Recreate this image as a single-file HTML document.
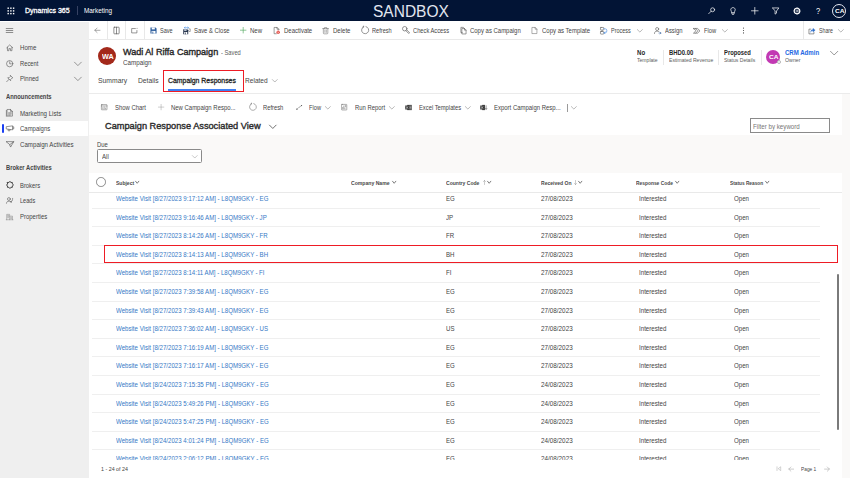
<!DOCTYPE html>
<html><head><meta charset="utf-8"><title>Wadi Al Riffa Campaign</title>
<style>
*{box-sizing:border-box;margin:0;padding:0}
html,body{width:850px;height:478px;overflow:hidden;background:#fff;font-family:"Liberation Sans",sans-serif;color:#333}
.a{position:absolute;white-space:nowrap;transform-origin:0 50%}
.b{position:absolute}
#top{left:0;top:0;width:850px;height:21px;background:#021435}
#side{left:0;top:22.4px;width:88.8px;height:456px;background:#efefef}
#cmd{left:89px;top:21px;width:761px;height:19px;background:#fff;border-bottom:1px solid #e9e9e9}
#hdr{left:89px;top:40px;width:761px;height:54px;background:#fff;border-bottom:1px solid #ebebeb}
#body{left:89px;top:94px;width:761px;height:384px;background:#faf9f8}
#card{left:89px;top:94px;width:753px;height:384px;background:#fff}
#fil{left:89px;top:135px;width:753px;height:38px;background:#faf9f8}
#clip{left:89px;top:191.5px;width:753px;height:268.5px;overflow:hidden}
#clip>.in{position:absolute;left:-89px;top:-191.5px;width:850px;height:478px}
.rl{position:absolute;left:91.5px;width:728px;height:1px;background:#efefef}
.vs{position:absolute;width:1px;background:#e8e8e8}
svg{position:absolute;overflow:visible;fill:none;stroke:#444;stroke-width:.6;stroke-linecap:round;stroke-linejoin:round}
</style></head><body>
<div class="b" id="top"></div>
<div class="b" id="side"></div>
<div class="b" style="left:0;top:121px;width:88px;height:14.7px;background:#fff"></div>
<div class="b" style="left:1.8px;top:123.5px;width:1.9px;height:9.2px;background:#1a3ff2;border-radius:1px"></div>
<div class="b" id="cmd"></div>
<div class="b" id="hdr"></div>
<div class="b" id="body"></div>
<div class="b" id="card"></div>
<div class="b" id="fil"></div>
<!-- separators -->
<div class="vs" style="left:76.5px;top:6px;height:9px;background:#364263"></div>
<div class="vs" style="left:107px;top:21px;height:18px"></div>
<div class="vs" style="left:125px;top:21px;height:18px"></div>
<div class="vs" style="left:144px;top:21px;height:18px"></div>
<div class="vs" style="left:803px;top:21px;height:18px"></div>
<div class="vs" style="left:662.5px;top:49.5px;height:15px"></div>
<div class="vs" style="left:718px;top:49.5px;height:15px"></div>
<div class="vs" style="left:761px;top:49.5px;height:15px"></div>
<div class="vs" style="left:566.5px;top:103.5px;height:8px;background:#9a9a9a"></div>
<!-- avatars -->
<div class="b" style="left:98.2px;top:46.7px;width:18.2px;height:18.2px;border-radius:50%;background:#a3291b"></div>
<div class="b" style="left:766.4px;top:49.9px;width:14px;height:14px;border-radius:50%;background:#c239b3"></div>
<div class="b" style="left:776.6px;top:60px;width:4.4px;height:4.4px;border-radius:50%;background:#fff;border:.6px solid #b5b5b5"></div>
<div class="b" style="left:832.4px;top:4px;width:14px;height:14px;border-radius:50%;border:.7px solid #e4e7f0"></div>
<!-- tab highlight -->
<div class="b" style="left:168.3px;top:89px;width:67.8px;height:1.8px;background:#3f7ff2"></div>
<div class="b" style="left:163px;top:70px;width:80.6px;height:22px;border:1.2px solid #ee1c25"></div>
<!-- inputs -->
<div class="b" style="left:749.9px;top:117.9px;width:79.8px;height:15.4px;border:1px solid #8a8a8a;background:#fff"></div>
<div class="b" style="left:97.3px;top:149px;width:105.2px;height:14.4px;border:1px solid #8a8a8a;border-radius:1.5px;background:#fff"></div>
<div class="b" style="left:96.1px;top:177.4px;width:9.6px;height:9.6px;border-radius:50%;border:.8px solid #8a8a8a;background:#fff"></div>
<div class="b" style="left:89px;top:191.5px;width:753px;height:1px;background:#e9e9e9"></div>
<!-- scrollbar -->
<div class="b" style="left:836.8px;top:274px;width:2.2px;height:155.5px;background:#7a7a7a;border-radius:1px"></div>
<svg style="left:6.70px;top:6.70px;stroke:#fff;stroke-width:1.30" width="7.60" height="7.60" viewBox="0 0 16 16"><rect x="1.0" y="1.0" width="3" height="3" fill="#fff" stroke="none"/><rect x="1.0" y="6.7" width="3" height="3" fill="#fff" stroke="none"/><rect x="1.0" y="12.4" width="3" height="3" fill="#fff" stroke="none"/><rect x="6.7" y="1.0" width="3" height="3" fill="#fff" stroke="none"/><rect x="6.7" y="6.7" width="3" height="3" fill="#fff" stroke="none"/><rect x="6.7" y="12.4" width="3" height="3" fill="#fff" stroke="none"/><rect x="12.4" y="1.0" width="3" height="3" fill="#fff" stroke="none"/><rect x="12.4" y="6.7" width="3" height="3" fill="#fff" stroke="none"/><rect x="12.4" y="12.4" width="3" height="3" fill="#fff" stroke="none"/></svg>
<svg style="left:708.30px;top:7.30px;stroke:#fff;stroke-width:1.50" width="7.40" height="7.40" viewBox="0 0 16 16"><circle cx="10" cy="6" r="4.3"/><path d="M7 9 L1.5 14.5"/></svg>
<svg style="left:728.60px;top:6.80px;stroke:#fff;stroke-width:1.40" width="8.00" height="8.00" viewBox="0 0 16 16"><path d="M5.8 11 C5.8 9 3.5 8.5 3.5 5.5 C3.5 3 5.5 1.2 8 1.2 C10.5 1.2 12.5 3 12.5 5.5 C12.5 8.5 10.2 9 10.2 11 Z M5.8 11 V13.5 C5.8 14.5 6.5 15 8 15 C9.5 15 10.2 14.5 10.2 13.5 V11"/></svg>
<svg style="left:750.50px;top:7.20px;stroke:#fff;stroke-width:1.50" width="7.60" height="7.60" viewBox="0 0 16 16"><path d="M8 1 V15 M1 8 H15"/></svg>
<svg style="left:771.70px;top:7.40px;stroke:#fff;stroke-width:1.50" width="7.60" height="7.60" viewBox="0 0 16 16"><path d="M1.5 2 H14.5 L9.5 8.5 V13 L6.5 15 V8.5 Z"/></svg>
<svg style="left:792.70px;top:7.00px;stroke:#fff;stroke-width:1.20" width="8.00" height="8.00" viewBox="0 0 16 16"><circle cx="8" cy="8" r="5.6" stroke-dasharray="2.2 1.1" stroke-width="2.6"/><circle cx="8" cy="8" r="2.2"/></svg>
<svg style="left:94.10px;top:27.10px;stroke:#6a6a6a;stroke-width:1.40" width="6.60" height="6.60" viewBox="0 0 16 16"><path d="M14.5 8 H2 M7.5 2.5 L2 8 L7.5 13.5"/></svg>
<svg style="left:112.70px;top:26.90px;stroke:#555;stroke-width:1.50" width="7.00" height="7.00" viewBox="0 0 16 16"><rect x="2" y="0.5" width="12" height="15" rx="1"/><path d="M8 0.5 V15.5"/></svg>
<svg style="left:131.10px;top:27.10px;stroke:#555;stroke-width:1.40" width="7.00" height="7.00" viewBox="0 0 16 16"><path d="M10 3.5 H1.5 V13.5 H13.5 V8"/><circle cx="13.8" cy="3" r="1.1" fill="#444" stroke="none"/></svg>
<svg style="left:150.30px;top:26.60px;stroke:#444;stroke-width:1.30" width="7.00" height="7.00" viewBox="0 0 16 16"><path d="M1 1 H12.5 L15 3.5 V15 H1 Z" fill="#2f5f9e" stroke="none"/><rect x="4" y="1" width="7" height="4.5" fill="#fff" stroke="none"/><rect x="3.5" y="9" width="9" height="6" fill="#fff" stroke="none"/><rect x="5.5" y="10.5" width="2" height="4.5" fill="#2f5f9e" stroke="none"/></svg>
<svg style="left:183.00px;top:26.60px;stroke:#444;stroke-width:1.30" width="7.60" height="7.60" viewBox="0 0 16 16"><path d="M0.5 5 H9 L11 7 V15.5 H0.5 Z" fill="#26344d" stroke="none"/><rect x="2.5" y="5" width="5" height="3" fill="#dfe6f2" stroke="none"/><rect x="2.5" y="10.5" width="6.5" height="5" fill="#fff" stroke="none"/><rect x="4" y="11.5" width="1.6" height="4" fill="#26344d" stroke="none"/><path d="M12.5 4 H15.2 V9.5 H12.8" stroke="#555" stroke-width="1.1"/><path d="M3 1.5 H11.5 M4.5 0.2 L3 1.5 L4.5 2.8 M10 0.2 L11.5 1.5 L10 2.8" stroke="#2f7de1" stroke-width="1.1"/></svg>
<svg style="left:240.20px;top:27.20px;stroke:#4fa85c;stroke-width:1.60" width="6.40" height="6.40" viewBox="0 0 16 16"><path d="M8 1 V15 M1 8 H15"/></svg>
<svg style="left:272.60px;top:26.80px;stroke:#555;stroke-width:1.30" width="7.20" height="7.20" viewBox="0 0 16 16"><path d="M13 6 V5 L9 1 H2.5 V15 H7.5 M9 1 V5 H13"/><circle cx="11.5" cy="11.5" r="3.6" fill="#e0342c" stroke="none"/><path d="M10.2 10.2 L12.8 12.8 M12.8 10.2 L10.2 12.8" stroke="#fff" stroke-width="1"/></svg>
<svg style="left:322.20px;top:26.60px;stroke:#6a6a6a;stroke-width:1.20" width="7.20" height="7.20" viewBox="0 0 16 16"><path d="M1.5 3.5 H14.5 M5.5 3.5 V1.2 H10.5 V3.5 M3 3.5 V13.5 Q3 15.2 4.7 15.2 H11.3 Q13 15.2 13 13.5 V3.5 M6.4 6.5 V12 M9.6 6.5 V12"/></svg>
<svg style="left:360.70px;top:25.60px;stroke:#555;stroke-width:1.20" width="8.20" height="8.20" viewBox="0 0 16 16"><path d="M9.8 1.2 A7 7 0 1 1 4.8 1.8 M5.2 0.2 V2.2 H3.4"/></svg>
<svg style="left:402.10px;top:26.00px;stroke:#555;stroke-width:1.30" width="7.80" height="7.80" viewBox="0 0 16 16"><circle cx="5.6" cy="5.6" r="4.6"/><path d="M8 9.6 L13.2 15 Q14.6 15.6 15.2 14.4 L15.2 13.4 L9.8 8"/></svg>
<svg style="left:459.70px;top:26.80px;stroke:#555;stroke-width:1.30" width="7.20" height="7.20" viewBox="0 0 16 16"><path d="M5 3.5 H10 L13.5 7 V15.5 H5 Z M10 3.5 V7 H13.5 M5 12.5 H2 V0.8 H7.5 L9.5 3"/></svg>
<svg style="left:530.70px;top:26.90px;stroke:#666;stroke-width:1.20" width="7.00" height="7.00" viewBox="0 0 16 16"><path d="M3 1 H9.5 L13.5 5 V15 H3 Z M9.5 1 V5 H13.5"/></svg>
<svg style="left:600.20px;top:26.60px;stroke:#555;stroke-width:1.20" width="7.60" height="7.60" viewBox="0 0 16 16"><rect x="1" y="1" width="7" height="5.5" rx="1"/><rect x="1" y="9.5" width="7" height="5.5" rx="1"/><path d="M4.5 6.5 V9.5"/><path d="M8 3.8 H11 Q14.5 3.8 14.5 8 Q14.5 12.2 11 12.2 H8.5 M10.5 10.2 L8.5 12.2 L10.5 14.2" stroke="#2f7de1"/></svg>
<svg style="left:637.35px;top:27.85px;stroke:#666;stroke-width:1.30" width="5.70" height="5.70" viewBox="0 0 16 16"><path d="M1 4.5 L8 11.5 L15 4.5"/></svg>
<svg style="left:654.00px;top:26.80px;stroke:#555;stroke-width:1.30" width="7.20" height="7.20" viewBox="0 0 16 16"><circle cx="7" cy="4.5" r="3.4"/><path d="M1 14.5 C1 10.5 3.5 9.3 7 9.3 C8.5 9.3 9.8 9.6 10.8 10.2"/><path d="M11 13.5 H15.5 M13.5 11.5 L15.5 13.5 L13.5 15.5" stroke="#2f5f9e"/></svg>
<svg style="left:692.50px;top:26.60px;stroke:#555;stroke-width:1.30" width="7.60" height="7.60" viewBox="0 0 16 16"><path d="M1 3 H9.5 L14.8 8 L9.5 13 H1 L6 8 Z M5.5 3 L10.5 8 L5.5 13"/></svg>
<svg style="left:721.85px;top:27.85px;stroke:#666;stroke-width:1.30" width="5.70" height="5.70" viewBox="0 0 16 16"><path d="M1 4.5 L8 11.5 L15 4.5"/></svg>
<svg style="left:739.80px;top:26.90px;stroke:#444;stroke-width:1.30" width="7.00" height="7.00" viewBox="0 0 16 16"><circle cx="8" cy="2.5" r="1.25" fill="#444" stroke="none"/><circle cx="8" cy="8" r="1.25" fill="#444" stroke="none"/><circle cx="8" cy="13.5" r="1.25" fill="#444" stroke="none"/></svg>
<svg style="left:807.60px;top:26.60px;stroke:#444;stroke-width:1.30" width="7.60" height="7.60" viewBox="0 0 16 16"><path d="M6 4.5 H2 V14.5 H12.5 V11" stroke="#555"/><path d="M5.5 10.5 C5.5 7 8 5.2 10.5 5.2 V2.5 L15.2 6.6 L10.5 10.6 V8 C8.5 8 6.8 8.6 5.5 10.5 Z" fill="#2f6fcb" stroke="#2f6fcb" stroke-width=".6"/></svg>
<svg style="left:837.75px;top:27.85px;stroke:#666;stroke-width:1.30" width="5.70" height="5.70" viewBox="0 0 16 16"><path d="M1 4.5 L8 11.5 L15 4.5"/></svg>
<svg style="left:6.20px;top:26.90px;stroke:#555;stroke-width:1.50" width="7.00" height="7.00" viewBox="0 0 16 16"><path d="M0.5 3.5 H15.5 M0.5 8 H15.5 M0.5 12.5 H15.5"/></svg>
<svg style="left:6.10px;top:44.20px;stroke:#555;stroke-width:1.30" width="7.40" height="7.40" viewBox="0 0 16 16"><path d="M1.5 8.2 L8 2 L14.5 8.2 M3.2 7 V14.5 H6.3 V10 H9.7 V14.5 H12.8 V7"/></svg>
<svg style="left:6.10px;top:59.60px;stroke:#555;stroke-width:1.30" width="7.40" height="7.40" viewBox="0 0 16 16"><circle cx="8" cy="8" r="6.8"/><path d="M8 3.8 V8.3 H11.5"/></svg>
<svg style="left:6.10px;top:75.20px;stroke:#555;stroke-width:1.30" width="7.40" height="7.40" viewBox="0 0 16 16"><path d="M9.8 1.2 L14.8 6.2 L12.6 6.8 L10.2 9.2 L10 12.4 L3.6 6 L6.8 5.8 L9.2 3.4 Z M6.6 9.4 L1.5 14.5"/></svg>
<svg style="left:74.40px;top:59.70px;stroke:#555;stroke-width:1.20" width="7.80" height="7.80" viewBox="0 0 16 16"><path d="M1 4.5 L8 11.5 L15 4.5"/></svg>
<svg style="left:74.40px;top:75.20px;stroke:#555;stroke-width:1.20" width="7.80" height="7.80" viewBox="0 0 16 16"><path d="M1 4.5 L8 11.5 L15 4.5"/></svg>
<svg style="left:5.80px;top:109.20px;stroke:#555;stroke-width:1.20" width="7.60" height="7.60" viewBox="0 0 16 16"><path d="M3 1 H9.5 L13.5 5 V15 H3 Z M9.5 1 V5 H13.5 M5.5 8 H11 M5.5 10.5 H11 M5.5 13 H9"/><path d="M0.8 3 V15.5" /></svg>
<svg style="left:5.70px;top:124.40px;stroke:#555;stroke-width:1.20" width="8.20" height="8.20" viewBox="0 0 16 16"><path d="M1.2 5.2 L13 3.6 V11.4 L1.2 9.8 Z M13 5.6 H15.2 V9.4 H13 M4.2 10.4 V13.2 H7.8 V10.8"/></svg>
<svg style="left:5.70px;top:140.10px;stroke:#555;stroke-width:1.20" width="8.20" height="8.20" viewBox="0 0 16 16"><path d="M0.8 3.2 H15.2 L9 13.8 L7.2 9.2 Z M7.2 9.2 L15.2 3.2"/></svg>
<svg style="left:5.90px;top:181.30px;stroke:#3a3a3a;stroke-width:1.90" width="7.80" height="7.80" viewBox="0 0 16 16"><path d="M3 3 H6 C5.2 0.8 10.8 0.8 10 3 H13 V6 C15.2 5.2 15.2 10.8 13 10 V13 H10 C10.8 15.2 5.2 15.2 6 13 H3 V10 C0.8 10.8 0.8 5.2 3 6 Z"/></svg>
<svg style="left:6.40px;top:197.10px;stroke:#555;stroke-width:1.30" width="7.20" height="7.20" viewBox="0 0 16 16"><circle cx="6.5" cy="4.5" r="3.2"/><path d="M1 14 C1 10.5 3.5 9.5 6.5 9.5 C7.5 9.5 8.4 9.6 9.2 9.9"/><path d="M14.8 3 C14.8 8 13.5 10 10.5 10.8 M10.5 10.8 L12 9 M10.5 10.8 L12.6 11.8" /></svg>
<svg style="left:6.40px;top:212.70px;stroke:#888;stroke-width:1.20" width="7.20" height="7.20" viewBox="0 0 16 16"><path d="M1.5 15 V3 H8 V15 M8 7 H14.5 V15 M0.5 15 H15.5 M3.6 5.5 H5.8 M3.6 8 H5.8 M3.6 10.5 H5.8 M10.2 9.5 H12.4 M10.2 12 H12.4"/></svg>
<svg style="left:271.70px;top:78.10px;stroke:#666;stroke-width:1.30" width="5.60" height="5.60" viewBox="0 0 16 16"><path d="M1 4.5 L8 11.5 L15 4.5"/></svg>
<svg style="left:829.95px;top:48.85px;stroke:#555;stroke-width:1.20" width="8.30" height="8.30" viewBox="0 0 16 16"><path d="M1 4.5 L8 11.5 L15 4.5"/></svg>
<svg style="left:100.80px;top:104.20px;stroke:#666;stroke-width:1.30" width="6.40" height="6.40" viewBox="0 0 16 16"><rect x="1" y="1.5" width="14" height="13" rx="1"/><path d="M1 5 H15 M4.5 12 V9 M8 12 V7.5 M11.5 12 V10"/></svg>
<svg style="left:157.50px;top:104.30px;stroke:#888;stroke-width:1.10" width="6.20" height="6.20" viewBox="0 0 16 16"><path d="M8 1 V15 M1 8 H15"/></svg>
<svg style="left:249.30px;top:103.00px;stroke:#666;stroke-width:1.10" width="7.80" height="7.80" viewBox="0 0 16 16"><path d="M9.8 1.2 A7 7 0 1 1 4.8 1.8 M5.2 0.2 V2.2 H3.4"/></svg>
<svg style="left:295.60px;top:103.90px;stroke:#555;stroke-width:1.20" width="6.60" height="6.60" viewBox="0 0 16 16"><path d="M2 12.5 C5 12.5 5.5 8 8 8 C10.5 8 10 4 13 4"/><circle cx="2.2" cy="12.5" r="1.3" fill="#444" stroke="none"/><circle cx="13.6" cy="3.8" r="1.3" fill="#444" stroke="none"/></svg>
<svg style="left:325.35px;top:104.85px;stroke:#666;stroke-width:1.30" width="5.70" height="5.70" viewBox="0 0 16 16"><path d="M1 4.5 L8 11.5 L15 4.5"/></svg>
<svg style="left:340.80px;top:104.20px;stroke:#666;stroke-width:1.30" width="6.40" height="6.40" viewBox="0 0 16 16"><rect x="1.5" y="1" width="13" height="14" rx="1"/><path d="M4.2 12 V8.5 M7 12 V5 M9.8 12 V9.8 M12 4 H10.5 M12 6.5 H10.5"/></svg>
<svg style="left:388.95px;top:104.85px;stroke:#666;stroke-width:1.30" width="5.70" height="5.70" viewBox="0 0 16 16"><path d="M1 4.5 L8 11.5 L15 4.5"/></svg>
<svg style="left:404.50px;top:103.90px;stroke:#444;stroke-width:1.30" width="7.00" height="7.00" viewBox="0 0 16 16"><rect x="5" y="2" width="10.5" height="12" fill="#444" stroke="none"/><rect x="0.5" y="3.5" width="8.5" height="9" fill="#333" stroke="none"/><path d="M3 6 L6.5 10.2 M6.5 6 L3 10.2" stroke="#fff" stroke-width="1.2"/><path d="M11 5 H13.5 M11 8 H13.5 M11 11 H13.5" stroke="#fff" stroke-width="1"/></svg>
<svg style="left:464.65px;top:104.85px;stroke:#666;stroke-width:1.30" width="5.70" height="5.70" viewBox="0 0 16 16"><path d="M1 4.5 L8 11.5 L15 4.5"/></svg>
<svg style="left:479.80px;top:103.90px;stroke:#444;stroke-width:1.30" width="7.00" height="7.00" viewBox="0 0 16 16"><rect x="5" y="2" width="6.5" height="12" fill="#444" stroke="none"/><rect x="0.5" y="3.5" width="8.5" height="9" fill="#333" stroke="none"/><path d="M3 6 L6.5 10.2 M6.5 6 L3 10.2" stroke="#fff" stroke-width="1.2"/><path d="M14 4 V12 M12.3 10.2 L14 12.2 L15.7 10.2" stroke="#444" stroke-width="1.2"/></svg>
<svg style="left:570.85px;top:104.85px;stroke:#666;stroke-width:1.30" width="5.70" height="5.70" viewBox="0 0 16 16"><path d="M1 4.5 L8 11.5 L15 4.5"/></svg>
<svg style="left:268.90px;top:123.20px;stroke:#3a3a3a;stroke-width:1.50" width="7.60" height="7.60" viewBox="0 0 16 16"><path d="M1 4.5 L8 11.5 L15 4.5"/></svg>
<svg style="left:192.40px;top:153.80px;stroke:#888;stroke-width:1.30" width="5.60" height="5.60" viewBox="0 0 16 16"><path d="M1 4.5 L8 11.5 L15 4.5"/></svg>
<svg style="left:135.10px;top:180.30px;stroke:#333;stroke-width:2.30" width="4.40" height="4.40" viewBox="0 0 16 16"><path d="M2 4.5 L8 12 L14 4.5"/></svg>
<svg style="left:391.60px;top:180.30px;stroke:#333;stroke-width:2.30" width="4.40" height="4.40" viewBox="0 0 16 16"><path d="M2 4.5 L8 12 L14 4.5"/></svg>
<svg style="left:487.30px;top:180.30px;stroke:#333;stroke-width:2.30" width="4.40" height="4.40" viewBox="0 0 16 16"><path d="M2 4.5 L8 12 L14 4.5"/></svg>
<svg style="left:578.40px;top:180.30px;stroke:#333;stroke-width:2.30" width="4.40" height="4.40" viewBox="0 0 16 16"><path d="M2 4.5 L8 12 L14 4.5"/></svg>
<svg style="left:674.50px;top:180.30px;stroke:#333;stroke-width:2.30" width="4.40" height="4.40" viewBox="0 0 16 16"><path d="M2 4.5 L8 12 L14 4.5"/></svg>
<svg style="left:765.30px;top:180.30px;stroke:#333;stroke-width:2.30" width="4.40" height="4.40" viewBox="0 0 16 16"><path d="M2 4.5 L8 12 L14 4.5"/></svg>
<svg style="left:481.50px;top:180.10px;stroke:#777;stroke-width:1.20" width="5.00" height="5.00" viewBox="0 0 16 16"><path d="M8 14.5 V1.5 M4.5 5 L8 1.5 L11.5 5"/></svg>
<svg style="left:573.00px;top:180.10px;stroke:#777;stroke-width:1.20" width="5.00" height="5.00" viewBox="0 0 16 16"><path d="M8 1.5 V14.5 M4.5 11 L8 14.5 L11.5 11"/></svg>
<svg style="left:775.70px;top:465.90px;stroke:#a8a8a8;stroke-width:1.50" width="5.40" height="5.40" viewBox="0 0 16 16"><path d="M3 2.5 V13.5 M13 3 L6.5 8 L13 13 Z"/></svg>
<svg style="left:787.90px;top:465.50px;stroke:#a8a8a8;stroke-width:1.50" width="6.20" height="6.20" viewBox="0 0 16 16"><path d="M14.5 8 H2 M7.5 2.5 L2 8 L7.5 13.5"/></svg>
<svg style="left:823.60px;top:465.50px;stroke:#a8a8a8;stroke-width:1.50" width="6.20" height="6.20" viewBox="0 0 16 16"><path d="M1.5 8 H14 M8.5 2.5 L14 8 L8.5 13.5"/></svg>
<span class="a" style="left:24.80px;top:6px;font-size:7.67px;line-height:10px;color:#fff;transform:scaleX(0.9214);-webkit-text-stroke:0.31px #fff">Dynamics 365</span>
<span class="a" style="left:84.30px;top:6px;font-size:6.70px;line-height:9px;color:#fff;transform:scaleX(0.9532)">Marketing</span>
<span class="a" style="left:372.50px;top:1px;font-size:16.80px;line-height:21px;color:#e3e7f0;transform:scaleX(0.9247)">SANDBOX</span>
<span class="a" style="left:834.70px;top:7px;font-size:6.05px;line-height:8px;color:#fff;transform:scaleX(1.0896);font-weight:700">CA</span>
<span class="a" style="left:815.90px;top:6px;font-size:8.21px;line-height:11px;color:#fff;transform:scaleX(0.9205)">?</span>
<span class="a" style="left:160.10px;top:26px;font-size:6.70px;line-height:9px;color:#444444;transform:scaleX(0.8262)">Save</span>
<span class="a" style="left:193.70px;top:26px;font-size:6.70px;line-height:9px;color:#444444;transform:scaleX(0.8783)">Save &amp; Close</span>
<span class="a" style="left:250.30px;top:26px;font-size:6.70px;line-height:9px;color:#444444;transform:scaleX(0.9036)">New</span>
<span class="a" style="left:283.80px;top:26px;font-size:6.70px;line-height:9px;color:#444444;transform:scaleX(0.8921)">Deactivate</span>
<span class="a" style="left:333.00px;top:26px;font-size:6.70px;line-height:9px;color:#444444;transform:scaleX(0.9047)">Delete</span>
<span class="a" style="left:371.80px;top:26px;font-size:6.70px;line-height:9px;color:#444444;transform:scaleX(0.8411)">Refresh</span>
<span class="a" style="left:412.80px;top:26px;font-size:6.70px;line-height:9px;color:#444444;transform:scaleX(0.8571)">Check Access</span>
<span class="a" style="left:470.20px;top:26px;font-size:6.70px;line-height:9px;color:#444444;transform:scaleX(0.8914)">Copy as Campaign</span>
<span class="a" style="left:541.60px;top:26px;font-size:6.70px;line-height:9px;color:#444444;transform:scaleX(0.8988)">Copy as Template</span>
<span class="a" style="left:611.00px;top:26px;font-size:6.70px;line-height:9px;color:#444444;transform:scaleX(0.8191)">Process</span>
<span class="a" style="left:664.70px;top:26px;font-size:6.70px;line-height:9px;color:#444444;transform:scaleX(0.8716)">Assign</span>
<span class="a" style="left:703.50px;top:26px;font-size:6.70px;line-height:9px;color:#444444;transform:scaleX(0.8566)">Flow</span>
<span class="a" style="left:818.90px;top:26px;font-size:6.70px;line-height:9px;color:#444444;transform:scaleX(0.7839)">Share</span>
<span class="a" style="left:19.90px;top:43px;font-size:6.70px;line-height:9px;color:#444444;transform:scaleX(0.9135)">Home</span>
<span class="a" style="left:19.90px;top:59px;font-size:6.70px;line-height:9px;color:#444444;transform:scaleX(0.8631)">Recent</span>
<span class="a" style="left:19.90px;top:74px;font-size:6.70px;line-height:9px;color:#444444;transform:scaleX(0.8978)">Pinned</span>
<span class="a" style="left:19.90px;top:109px;font-size:6.70px;line-height:9px;color:#444444;transform:scaleX(0.9181)">Marketing Lists</span>
<span class="a" style="left:19.90px;top:124px;font-size:6.70px;line-height:9px;color:#444444;transform:scaleX(0.8927)">Campaigns</span>
<span class="a" style="left:19.90px;top:140px;font-size:6.70px;line-height:9px;color:#444444;transform:scaleX(0.9184)">Campaign Activities</span>
<span class="a" style="left:19.90px;top:181px;font-size:6.70px;line-height:9px;color:#444444;transform:scaleX(0.8765)">Brokers</span>
<span class="a" style="left:19.90px;top:196px;font-size:6.70px;line-height:9px;color:#444444;transform:scaleX(0.8336)">Leads</span>
<span class="a" style="left:19.90px;top:212px;font-size:6.70px;line-height:9px;color:#444444;transform:scaleX(0.8923)">Properties</span>
<span class="a" style="left:6.20px;top:92px;font-size:6.70px;line-height:9px;color:#444444;transform:scaleX(0.8704);font-weight:700">Announcements</span>
<span class="a" style="left:6.10px;top:163px;font-size:6.70px;line-height:9px;color:#444444;transform:scaleX(0.8638);font-weight:700">Broker Activities</span>
<span class="a" style="left:101.60px;top:52px;font-size:7.13px;line-height:10px;color:#fff;transform:scaleX(1.0128);font-weight:700">WA</span>
<span class="a" style="left:123.00px;top:46px;font-size:9.00px;line-height:12px;color:#262626;transform:scaleX(1.0069);-webkit-text-stroke:0.36px #262626">Wadi Al Riffa Campaign</span>
<span class="a" style="left:221.40px;top:48px;font-size:6.70px;line-height:9px;color:#5c5c5c;transform:scaleX(0.8585)">- Saved</span>
<span class="a" style="left:123.00px;top:58px;font-size:6.70px;line-height:9px;color:#444444;transform:scaleX(0.9349)">Campaign</span>
<span class="a" style="left:97.90px;top:76px;font-size:7.67px;line-height:10px;color:#444444;transform:scaleX(0.8881)">Summary</span>
<span class="a" style="left:137.90px;top:76px;font-size:7.67px;line-height:10px;color:#444444;transform:scaleX(0.8758)">Details</span>
<span class="a" style="left:168.30px;top:76px;font-size:7.67px;line-height:10px;color:#262626;transform:scaleX(0.9012);-webkit-text-stroke:0.31px #262626">Campaign Responses</span>
<span class="a" style="left:245.10px;top:76px;font-size:7.67px;line-height:10px;color:#444444;transform:scaleX(0.8602)">Related</span>
<span class="a" style="left:636.80px;top:48px;font-size:6.70px;line-height:9px;color:#262626;transform:scaleX(0.9079);font-weight:700">No</span>
<span class="a" style="left:636.80px;top:56px;font-size:6.16px;line-height:8px;color:#5c5c5c;transform:scaleX(0.8226)">Template</span>
<span class="a" style="left:668.70px;top:48px;font-size:6.70px;line-height:9px;color:#262626;transform:scaleX(0.8831);font-weight:700">BHD0.00</span>
<span class="a" style="left:668.70px;top:56px;font-size:6.16px;line-height:8px;color:#5c5c5c;transform:scaleX(0.8229)">Estimated Revenue</span>
<span class="a" style="left:724.20px;top:48px;font-size:6.70px;line-height:9px;color:#262626;transform:scaleX(0.8689);font-weight:700">Proposed</span>
<span class="a" style="left:724.20px;top:56px;font-size:6.16px;line-height:8px;color:#5c5c5c;transform:scaleX(0.8208)">Status Details</span>
<span class="a" style="left:768.80px;top:53px;font-size:6.05px;line-height:8px;color:#fff;transform:scaleX(1.0781);font-weight:700">CA</span>
<span class="a" style="left:785.00px;top:48px;font-size:6.70px;line-height:9px;color:#2266e3;transform:scaleX(0.9056);font-weight:700">CRM Admin</span>
<span class="a" style="left:785.00px;top:56px;font-size:6.16px;line-height:8px;color:#5c5c5c;transform:scaleX(0.8566)">Owner</span>
<span class="a" style="left:114.70px;top:103px;font-size:6.70px;line-height:9px;color:#444444;transform:scaleX(0.8840)">Show Chart</span>
<span class="a" style="left:171.20px;top:103px;font-size:6.70px;line-height:9px;color:#444444;transform:scaleX(0.8898)">New Campaign Respo...</span>
<span class="a" style="left:263.40px;top:103px;font-size:6.70px;line-height:9px;color:#444444;transform:scaleX(0.8667)">Refresh</span>
<span class="a" style="left:309.40px;top:103px;font-size:6.70px;line-height:9px;color:#444444;transform:scaleX(0.8496)">Flow</span>
<span class="a" style="left:354.90px;top:103px;font-size:6.70px;line-height:9px;color:#444444;transform:scaleX(0.8800)">Run Report</span>
<span class="a" style="left:418.60px;top:103px;font-size:6.70px;line-height:9px;color:#444444;transform:scaleX(0.8666)">Excel Templates</span>
<span class="a" style="left:493.90px;top:103px;font-size:6.70px;line-height:9px;color:#444444;transform:scaleX(0.8913)">Export Campaign Resp...</span>
<span class="a" style="left:104.60px;top:120px;font-size:9.50px;line-height:12px;color:#2b2b2b;transform:scaleX(0.9702);-webkit-text-stroke:0.38px #2b2b2b">Campaign Response Associated View</span>
<span class="a" style="left:753.00px;top:122px;font-size:6.70px;line-height:9px;color:#767676;transform:scaleX(0.9259)">Filter by keyword</span>
<span class="a" style="left:97.40px;top:140px;font-size:6.70px;line-height:9px;color:#444444;transform:scaleX(0.8875)">Due</span>
<span class="a" style="left:102.00px;top:152px;font-size:6.70px;line-height:9px;color:#444444;transform:scaleX(0.9143)">All</span>
<span class="a" style="left:115.90px;top:179px;font-size:6.21px;line-height:8px;color:#484848;transform:scaleX(0.8078);font-weight:700">Subject</span>
<span class="a" style="left:351.40px;top:179px;font-size:6.21px;line-height:8px;color:#484848;transform:scaleX(0.8232);font-weight:700">Company Name</span>
<span class="a" style="left:445.90px;top:179px;font-size:6.21px;line-height:8px;color:#484848;transform:scaleX(0.8143);font-weight:700">Country Code</span>
<span class="a" style="left:540.80px;top:179px;font-size:6.21px;line-height:8px;color:#484848;transform:scaleX(0.8113);font-weight:700">Received On</span>
<span class="a" style="left:635.60px;top:179px;font-size:6.21px;line-height:8px;color:#484848;transform:scaleX(0.7869);font-weight:700">Response Code</span>
<span class="a" style="left:730.40px;top:179px;font-size:6.21px;line-height:8px;color:#484848;transform:scaleX(0.7681);font-weight:700">Status Reason</span>
<span class="a" style="left:101.10px;top:465px;font-size:5.72px;line-height:8px;color:#444444;transform:scaleX(0.9296)">1 - 24 of 24</span>
<span class="a" style="left:801.10px;top:465px;font-size:5.72px;line-height:8px;color:#444444;transform:scaleX(0.8434)">Page 1</span>
<div class="b" id="clip"><div class="in">
<div class="rl" style="top:207.5px"></div>
<div class="rl" style="top:226.1px"></div>
<div class="rl" style="top:244.7px"></div>
<div class="rl" style="top:263.3px"></div>
<div class="rl" style="top:281.9px"></div>
<div class="rl" style="top:300.5px"></div>
<div class="rl" style="top:319.1px"></div>
<div class="rl" style="top:337.7px"></div>
<div class="rl" style="top:356.3px"></div>
<div class="rl" style="top:374.9px"></div>
<div class="rl" style="top:393.5px"></div>
<div class="rl" style="top:412.1px"></div>
<div class="rl" style="top:430.7px"></div>
<div class="rl" style="top:449.3px"></div>
<div class="rl" style="top:467.9px"></div>
<span class="a" style="left:115.80px;top:194px;font-size:6.70px;line-height:9px;color:#3679c6;transform:scaleX(0.9131)">Website Visit [8/27/2023 9:17:12 AM] - L8QM9GKY - EG</span>
<span class="a" style="left:445.90px;top:194px;font-size:6.70px;line-height:9px;color:#444444;transform:scaleX(0.9131)">EG</span>
<span class="a" style="left:540.80px;top:194px;font-size:6.70px;line-height:9px;color:#444444;transform:scaleX(0.9467)">27/08/2023</span>
<span class="a" style="left:639.20px;top:194px;font-size:6.70px;line-height:9px;color:#444444;transform:scaleX(0.9210)">Interested</span>
<span class="a" style="left:734.00px;top:194px;font-size:6.70px;line-height:9px;color:#444444;transform:scaleX(0.9160)">Open</span>
<span class="a" style="left:115.80px;top:213px;font-size:6.70px;line-height:9px;color:#3679c6;transform:scaleX(0.9131)">Website Visit [8/27/2023 9:16:46 AM] - L8QM9GKY - JP</span>
<span class="a" style="left:445.90px;top:213px;font-size:6.70px;line-height:9px;color:#444444;transform:scaleX(0.9131)">JP</span>
<span class="a" style="left:540.80px;top:213px;font-size:6.70px;line-height:9px;color:#444444;transform:scaleX(0.9467)">27/08/2023</span>
<span class="a" style="left:639.20px;top:213px;font-size:6.70px;line-height:9px;color:#444444;transform:scaleX(0.9210)">Interested</span>
<span class="a" style="left:734.00px;top:213px;font-size:6.70px;line-height:9px;color:#444444;transform:scaleX(0.9160)">Open</span>
<span class="a" style="left:115.80px;top:231px;font-size:6.70px;line-height:9px;color:#3679c6;transform:scaleX(0.9131)">Website Visit [8/27/2023 8:14:26 AM] - L8QM9GKY - FR</span>
<span class="a" style="left:445.90px;top:231px;font-size:6.70px;line-height:9px;color:#444444;transform:scaleX(0.9131)">FR</span>
<span class="a" style="left:540.80px;top:231px;font-size:6.70px;line-height:9px;color:#444444;transform:scaleX(0.9467)">27/08/2023</span>
<span class="a" style="left:639.20px;top:231px;font-size:6.70px;line-height:9px;color:#444444;transform:scaleX(0.9210)">Interested</span>
<span class="a" style="left:734.00px;top:231px;font-size:6.70px;line-height:9px;color:#444444;transform:scaleX(0.9160)">Open</span>
<span class="a" style="left:115.80px;top:250px;font-size:6.70px;line-height:9px;color:#3679c6;transform:scaleX(0.9131)">Website Visit [8/27/2023 8:14:13 AM] - L8QM9GKY - BH</span>
<span class="a" style="left:445.90px;top:250px;font-size:6.70px;line-height:9px;color:#444444;transform:scaleX(0.9131)">BH</span>
<span class="a" style="left:540.80px;top:250px;font-size:6.70px;line-height:9px;color:#444444;transform:scaleX(0.9467)">27/08/2023</span>
<span class="a" style="left:639.20px;top:250px;font-size:6.70px;line-height:9px;color:#444444;transform:scaleX(0.9210)">Interested</span>
<span class="a" style="left:734.00px;top:250px;font-size:6.70px;line-height:9px;color:#444444;transform:scaleX(0.9160)">Open</span>
<span class="a" style="left:115.80px;top:268px;font-size:6.70px;line-height:9px;color:#3679c6;transform:scaleX(0.9131)">Website Visit [8/27/2023 8:14:11 AM] - L8QM9GKY - FI</span>
<span class="a" style="left:445.90px;top:268px;font-size:6.70px;line-height:9px;color:#444444;transform:scaleX(0.9131)">FI</span>
<span class="a" style="left:540.80px;top:268px;font-size:6.70px;line-height:9px;color:#444444;transform:scaleX(0.9467)">27/08/2023</span>
<span class="a" style="left:639.20px;top:268px;font-size:6.70px;line-height:9px;color:#444444;transform:scaleX(0.9210)">Interested</span>
<span class="a" style="left:734.00px;top:268px;font-size:6.70px;line-height:9px;color:#444444;transform:scaleX(0.9160)">Open</span>
<span class="a" style="left:115.80px;top:287px;font-size:6.70px;line-height:9px;color:#3679c6;transform:scaleX(0.9131)">Website Visit [8/27/2023 7:39:58 AM] - L8QM9GKY - EG</span>
<span class="a" style="left:445.90px;top:287px;font-size:6.70px;line-height:9px;color:#444444;transform:scaleX(0.9131)">EG</span>
<span class="a" style="left:540.80px;top:287px;font-size:6.70px;line-height:9px;color:#444444;transform:scaleX(0.9467)">27/08/2023</span>
<span class="a" style="left:639.20px;top:287px;font-size:6.70px;line-height:9px;color:#444444;transform:scaleX(0.9210)">Interested</span>
<span class="a" style="left:734.00px;top:287px;font-size:6.70px;line-height:9px;color:#444444;transform:scaleX(0.9160)">Open</span>
<span class="a" style="left:115.80px;top:306px;font-size:6.70px;line-height:9px;color:#3679c6;transform:scaleX(0.9131)">Website Visit [8/27/2023 7:39:43 AM] - L8QM9GKY - EG</span>
<span class="a" style="left:445.90px;top:306px;font-size:6.70px;line-height:9px;color:#444444;transform:scaleX(0.9131)">EG</span>
<span class="a" style="left:540.80px;top:306px;font-size:6.70px;line-height:9px;color:#444444;transform:scaleX(0.9467)">27/08/2023</span>
<span class="a" style="left:639.20px;top:306px;font-size:6.70px;line-height:9px;color:#444444;transform:scaleX(0.9210)">Interested</span>
<span class="a" style="left:734.00px;top:306px;font-size:6.70px;line-height:9px;color:#444444;transform:scaleX(0.9160)">Open</span>
<span class="a" style="left:115.80px;top:324px;font-size:6.70px;line-height:9px;color:#3679c6;transform:scaleX(0.9131)">Website Visit [8/27/2023 7:36:02 AM] - L8QM9GKY - US</span>
<span class="a" style="left:445.90px;top:324px;font-size:6.70px;line-height:9px;color:#444444;transform:scaleX(0.9131)">US</span>
<span class="a" style="left:540.80px;top:324px;font-size:6.70px;line-height:9px;color:#444444;transform:scaleX(0.9467)">27/08/2023</span>
<span class="a" style="left:639.20px;top:324px;font-size:6.70px;line-height:9px;color:#444444;transform:scaleX(0.9210)">Interested</span>
<span class="a" style="left:734.00px;top:324px;font-size:6.70px;line-height:9px;color:#444444;transform:scaleX(0.9160)">Open</span>
<span class="a" style="left:115.80px;top:343px;font-size:6.70px;line-height:9px;color:#3679c6;transform:scaleX(0.9131)">Website Visit [8/27/2023 7:16:19 AM] - L8QM9GKY - EG</span>
<span class="a" style="left:445.90px;top:343px;font-size:6.70px;line-height:9px;color:#444444;transform:scaleX(0.9131)">EG</span>
<span class="a" style="left:540.80px;top:343px;font-size:6.70px;line-height:9px;color:#444444;transform:scaleX(0.9467)">27/08/2023</span>
<span class="a" style="left:639.20px;top:343px;font-size:6.70px;line-height:9px;color:#444444;transform:scaleX(0.9210)">Interested</span>
<span class="a" style="left:734.00px;top:343px;font-size:6.70px;line-height:9px;color:#444444;transform:scaleX(0.9160)">Open</span>
<span class="a" style="left:115.80px;top:361px;font-size:6.70px;line-height:9px;color:#3679c6;transform:scaleX(0.9131)">Website Visit [8/27/2023 7:16:17 AM] - L8QM9GKY - EG</span>
<span class="a" style="left:445.90px;top:361px;font-size:6.70px;line-height:9px;color:#444444;transform:scaleX(0.9131)">EG</span>
<span class="a" style="left:540.80px;top:361px;font-size:6.70px;line-height:9px;color:#444444;transform:scaleX(0.9467)">27/08/2023</span>
<span class="a" style="left:639.20px;top:361px;font-size:6.70px;line-height:9px;color:#444444;transform:scaleX(0.9210)">Interested</span>
<span class="a" style="left:734.00px;top:361px;font-size:6.70px;line-height:9px;color:#444444;transform:scaleX(0.9160)">Open</span>
<span class="a" style="left:115.80px;top:380px;font-size:6.70px;line-height:9px;color:#3679c6;transform:scaleX(0.9131)">Website Visit [8/24/2023 7:15:35 PM] - L8QM9GKY - EG</span>
<span class="a" style="left:445.90px;top:380px;font-size:6.70px;line-height:9px;color:#444444;transform:scaleX(0.9131)">EG</span>
<span class="a" style="left:540.80px;top:380px;font-size:6.70px;line-height:9px;color:#444444;transform:scaleX(0.9467)">24/08/2023</span>
<span class="a" style="left:639.20px;top:380px;font-size:6.70px;line-height:9px;color:#444444;transform:scaleX(0.9210)">Interested</span>
<span class="a" style="left:734.00px;top:380px;font-size:6.70px;line-height:9px;color:#444444;transform:scaleX(0.9160)">Open</span>
<span class="a" style="left:115.80px;top:399px;font-size:6.70px;line-height:9px;color:#3679c6;transform:scaleX(0.9131)">Website Visit [8/24/2023 5:49:26 PM] - L8QM9GKY - EG</span>
<span class="a" style="left:445.90px;top:399px;font-size:6.70px;line-height:9px;color:#444444;transform:scaleX(0.9131)">EG</span>
<span class="a" style="left:540.80px;top:399px;font-size:6.70px;line-height:9px;color:#444444;transform:scaleX(0.9467)">24/08/2023</span>
<span class="a" style="left:639.20px;top:399px;font-size:6.70px;line-height:9px;color:#444444;transform:scaleX(0.9210)">Interested</span>
<span class="a" style="left:734.00px;top:399px;font-size:6.70px;line-height:9px;color:#444444;transform:scaleX(0.9160)">Open</span>
<span class="a" style="left:115.80px;top:417px;font-size:6.70px;line-height:9px;color:#3679c6;transform:scaleX(0.9131)">Website Visit [8/24/2023 5:47:25 PM] - L8QM9GKY - EG</span>
<span class="a" style="left:445.90px;top:417px;font-size:6.70px;line-height:9px;color:#444444;transform:scaleX(0.9131)">EG</span>
<span class="a" style="left:540.80px;top:417px;font-size:6.70px;line-height:9px;color:#444444;transform:scaleX(0.9467)">24/08/2023</span>
<span class="a" style="left:639.20px;top:417px;font-size:6.70px;line-height:9px;color:#444444;transform:scaleX(0.9210)">Interested</span>
<span class="a" style="left:734.00px;top:417px;font-size:6.70px;line-height:9px;color:#444444;transform:scaleX(0.9160)">Open</span>
<span class="a" style="left:115.80px;top:436px;font-size:6.70px;line-height:9px;color:#3679c6;transform:scaleX(0.9131)">Website Visit [8/24/2023 4:01:24 PM] - L8QM9GKY - EG</span>
<span class="a" style="left:445.90px;top:436px;font-size:6.70px;line-height:9px;color:#444444;transform:scaleX(0.9131)">EG</span>
<span class="a" style="left:540.80px;top:436px;font-size:6.70px;line-height:9px;color:#444444;transform:scaleX(0.9467)">24/08/2023</span>
<span class="a" style="left:639.20px;top:436px;font-size:6.70px;line-height:9px;color:#444444;transform:scaleX(0.9210)">Interested</span>
<span class="a" style="left:734.00px;top:436px;font-size:6.70px;line-height:9px;color:#444444;transform:scaleX(0.9160)">Open</span>
<span class="a" style="left:115.80px;top:454px;font-size:6.70px;line-height:9px;color:#3679c6;transform:scaleX(0.9131)">Website Visit [8/24/2023 2:06:12 PM] - L8QM9GKY - EG</span>
<span class="a" style="left:445.90px;top:454px;font-size:6.70px;line-height:9px;color:#444444;transform:scaleX(0.9131)">EG</span>
<span class="a" style="left:540.80px;top:454px;font-size:6.70px;line-height:9px;color:#444444;transform:scaleX(0.9467)">24/08/2023</span>
<span class="a" style="left:639.20px;top:454px;font-size:6.70px;line-height:9px;color:#444444;transform:scaleX(0.9210)">Interested</span>
<span class="a" style="left:734.00px;top:454px;font-size:6.70px;line-height:9px;color:#444444;transform:scaleX(0.9160)">Open</span>
</div></div>
<div class="b" style="left:104.3px;top:244.8px;width:733.5px;height:17.8px;border:1.2px solid #ee1c25"></div>
</body></html>
